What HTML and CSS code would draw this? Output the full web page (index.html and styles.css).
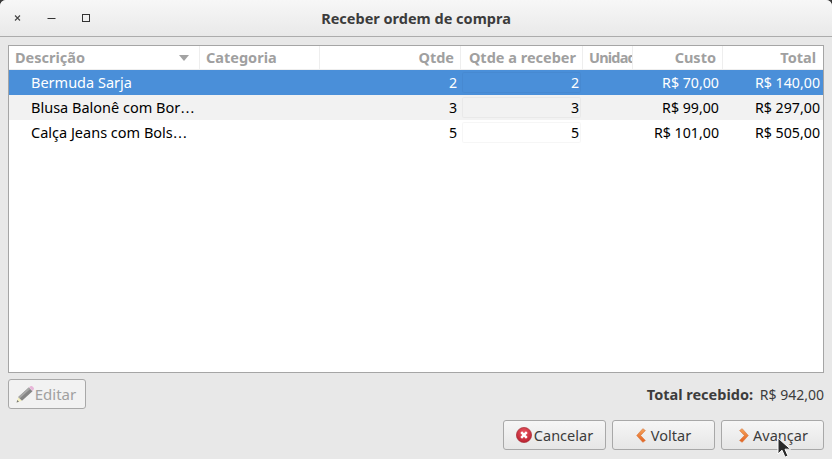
FILE: index.html
```html
<!DOCTYPE html>
<html lang="en">

<head>
    <meta charset="UTF-8">
    <title>Receber ordem de compra</title>
    <link rel="stylesheet" href="styles.css">
</head>

<body>
    <div class="window">
        <div class="titlebar">
            <div class="win-buttons">
                <svg class="win-btn" width="16" height="16" viewBox="0 0 16 16"><path d="M5 5.500l5 5M10 5.500l-5 5" stroke="#444" stroke-width="1.100" fill="none"/></svg>
                <svg class="win-btn" width="16" height="16" viewBox="0 0 16 16"><path d="M3.500 8.500h8" stroke="#333" stroke-width="1" fill="none"/></svg>
                <svg class="win-btn" width="16" height="16" viewBox="0 0 16 16"><rect x="4.500" y="4.500" width="7" height="7" stroke="#333" fill="none"/></svg>
            </div>
            <div class="title">Receber ordem de compra</div>
        </div>

        <div class="content">
            <div class="table">
                <div class="row head">
                    <div class="cell sort">Descrição
                        <svg width="10" height="6" viewBox="0 0 10 6"><path d="M0 0h10L5 6z" fill="#a3a3a3"/></svg>
                    </div>
                    <div class="cell">Categoria</div>
                    <div class="cell num">Qtde</div>
                    <div class="cell num">Qtde a receber</div>
                    <div class="cell clip">Unidade</div>
                    <div class="cell num">Custo</div>
                    <div class="cell num last">Total</div>
                </div>
                <div class="row selected">
                    <div class="cell name">Bermuda Sarja</div>
                    <div class="cell"></div>
                    <div class="cell num">2</div>
                    <div class="cell num edit">2</div>
                    <div class="cell"></div>
                    <div class="cell num">R$ 70,00</div>
                    <div class="cell num last">R$ 140,00</div>
                </div>
                <div class="row odd">
                    <div class="cell name">Blusa Balonê com Bor<span class="dots">…</span></div>
                    <div class="cell"></div>
                    <div class="cell num">3</div>
                    <div class="cell num edit">3</div>
                    <div class="cell"></div>
                    <div class="cell num">R$ 99,00</div>
                    <div class="cell num last">R$ 297,00</div>
                </div>
                <div class="row">
                    <div class="cell name">Calça Jeans com Bols<span class="dots">…</span></div>
                    <div class="cell"></div>
                    <div class="cell num">5</div>
                    <div class="cell num edit">5</div>
                    <div class="cell"></div>
                    <div class="cell num">R$ 101,00</div>
                    <div class="cell num last">R$ 505,00</div>
                </div>
            </div>

            <div class="summary">
                <button class="btn edit-btn" disabled>
                    <svg width="18" height="17" viewBox="0 0 18 17">
                        <path d="M0.500 16.500l1.800-5.500 3.700 3.700z" fill="#f4f0c2"/>
                        <path d="M0.500 16.500l.8-2.500 1.700 1.700z" fill="#777"/>
                        <path d="M2.300 11L12.800 1.500l3.700 3.700L6 14.700z" fill="#858585"/>
                        <path d="M2.300 11L12.800 1.500l1.400 1.400L3.700 12.400z" fill="#a8a8a8"/>
                        <path d="M13 1.300l1.500-1.100a1.500 1.500 0 0 1 2 .2l1 1.200a1.500 1.500 0 0 1 .1 2L16.700 5z" fill="#e7b6d8"/>
                    </svg>
                    Editar
                </button>
                <div class="total"><b>Total recebido:</b> <span class="total-value">R$ 942,00</span></div>
            </div>

            <div class="actions">
                <button class="btn action">
                    <svg width="16" height="16" viewBox="0 0 16 16">
                        <defs>
                            <radialGradient id="redBall" cx="50%" cy="35%" r="65%">
                                <stop offset="0" stop-color="#ee5b66"/>
                                <stop offset="1" stop-color="#b81f2e"/>
                            </radialGradient>
                        </defs>
                        <circle cx="8" cy="8" r="7.600" fill="url(#redBall)" stroke="#a8303a" stroke-width="0.700"/>
                        <path d="M5.200 5.200l5.600 5.600M10.800 5.200l-5.600 5.600" stroke="#fff" stroke-width="2.400" fill="none"/>
                    </svg>
                    Cancelar
                </button>
                <button class="btn action back">
                    <svg width="10" height="15" viewBox="0 0 10 15">
                        <defs>
                            <linearGradient id="orangeLeft" x1="0" y1="0" x2="0" y2="1">
                                <stop offset="0" stop-color="#f5a45c"/>
                                <stop offset="1" stop-color="#e2601f"/>
                            </linearGradient>
                        </defs>
                        <path d="M6.800 0.700L9.400 2.500 4.600 7.500l4.800 5-2.600 1.800L0.700 7.500z" fill="url(#orangeLeft)" stroke="#d9763a" stroke-width="0.600" stroke-linejoin="round"/>
                    </svg>
                    Voltar
                </button>
                <button class="btn action next">
                    <svg width="10" height="15" viewBox="0 0 10 15">
                        <defs>
                            <linearGradient id="orangeRight" x1="0" y1="0" x2="0" y2="1">
                                <stop offset="0" stop-color="#f5a45c"/>
                                <stop offset="1" stop-color="#e2601f"/>
                            </linearGradient>
                        </defs>
                        <path d="M3.200 0.700L0.600 2.500 5.400 7.500l-4.800 5 2.600 1.800L9.300 7.500z" fill="url(#orangeRight)" stroke="#d9763a" stroke-width="0.600" stroke-linejoin="round"/>
                    </svg>
                    Avançar
                </button>
            </div>
        </div>

        <svg class="cursor" width="16" height="22" viewBox="0 0 16 22">
            <path d="M1 1v16l4-3.800 3 7 3-1.300-3-6.700h5.500z" fill="#2a2a2a" stroke="#fff" stroke-width="1"/>
        </svg>
    </div>
</body>

</html>
```

FILE: styles.css
```css
html, body {
    margin: 0;
    height: 100%;
    background: #3a3a3a;
}

body {
    font-family: "Noto Sans", sans-serif;
    font-size: 14.5px;
    overflow: hidden;
}

.window {
    position: relative;
    height: 459px;
    background: #e8e8e8;
    border-radius: 6px 6px 0 0;
    overflow: hidden;
    display: flex;
    flex-direction: column;
}

.titlebar {
    position: relative;
    height: 36px;
    flex: none;
    background: linear-gradient(to bottom, #f7f7f7, #e9e9e9);
    border-bottom: 1px solid #acacac;
    display: flex;
    align-items: center;
    justify-content: center;
}

.win-buttons {
    position: absolute;
    left: 10px;
    top: 10px;
    display: flex;
    gap: 18px;
}

.title {
    font-weight: bold;
    color: #3c3c3c;
}

.content {
    flex: 1;
    padding: 8px;
    display: flex;
    flex-direction: column;
}

.table {
    height: 326px;
    flex: none;
    background: #fff;
    border: 1px solid #a5a5a5;
}

.row {
    display: grid;
    grid-template-columns: 191px 120px 141px 122px 50px 90px 100px;
    height: 25px;
    line-height: 25px;
    color: #000;
}

.cell {
    min-width: 0;
    padding: 0 4px 0 3px;
    white-space: nowrap;
    overflow: hidden;
}

.num {
    text-align: right;
    font-size: 14.2px;
}

.last {
    padding-right: 3px;
}

.name {
    padding-left: 22px;
}

.dots {
    font-family: "DejaVu Sans", sans-serif;
}

.head {
    height: 24px;
    line-height: 23px;
    font-weight: bold;
    color: #a0a0a0;
}

.head .cell {
    padding: 0 6px;
    font-size: 14.5px;
    border-right: 1px solid #eeeeee;
    border-bottom: 1px solid #eeeeee;
}

.head .last {
    padding-right: 7px;
    border-right: none;
}

.head .clip {
    padding-right: 0;
    letter-spacing: -0.8px;
}

.sort {
    display: flex;
    align-items: center;
    justify-content: space-between;
}

.sort svg {
    margin-right: 4px;
}

.selected {
    background: #4a8fd9;
    color: #fff;
}

.odd {
    background: #f2f2f2;
}

.edit {
    margin: 2px 2px 2px 1px;
    padding-right: 2px;
    height: 21px;
    line-height: 21px;
    border-radius: 2px;
    box-shadow: inset 0 0 0 1px rgba(0, 0, 0, 0.035);
}

.summary {
    display: flex;
    justify-content: space-between;
    align-items: center;
    margin-top: 6px;
    height: 30px;
}

.total {
    color: #3c3c3c;
}

.total b {
    margin-right: 3px;
}

.total-value {
    font-size: 14px;
}

.btn {
    font: inherit;
    color: #3c3c3c;
    height: 30px;
    padding: 0;
    border: 1px solid #a8a8a8;
    border-radius: 3px;
    background: linear-gradient(to bottom, #f6f6f6, #e6e6e6);
    display: flex;
    align-items: center;
    justify-content: center;
}

.edit-btn {
    width: 78px;
    gap: 1px;
    padding-right: 2px;
    font-size: 15px;
    color: #a0a0a0;
    background: #f2f2f2;
}

.actions {
    display: flex;
    justify-content: flex-end;
    gap: 6px;
    margin-top: 11px;
}

.action {
    width: 103px;
    gap: 2px;
}

.back {
    gap: 5px;
}

.next {
    gap: 4px;
    padding-left: 2px;
}

.cursor {
    position: absolute;
    left: 777px;
    top: 437px;
}
```
